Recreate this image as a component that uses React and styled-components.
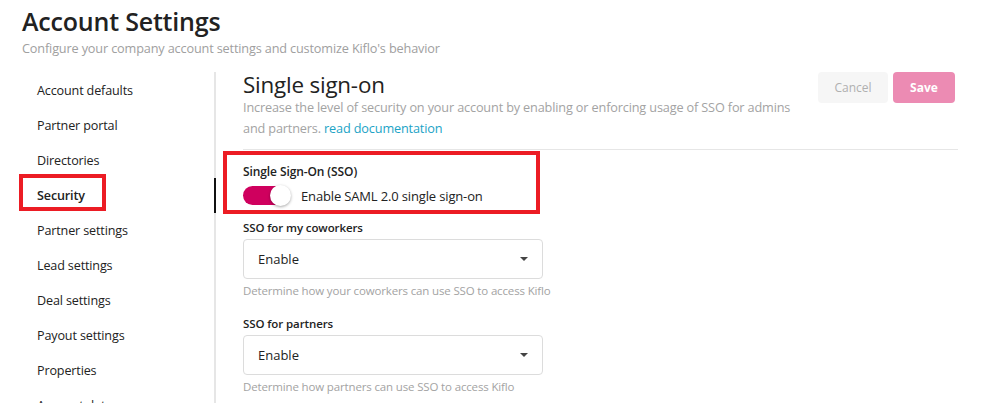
import styled, { createGlobalStyle } from 'styled-components'

const GlobalStyle = createGlobalStyle`
	html, body {
		margin: 0;
		padding: 0;
		background: #fff;
	}
	body {
		font-family: "Open Sans", "Noto Sans", sans-serif;
		color: #222;
		overflow: hidden;
	}
`

const Page = styled.div`
	width: 981px;
	height: 403px;
	overflow: hidden;
`

const Header = styled.header`
	padding: 5px 0 0 22px;
	height: 72px;
	box-sizing: border-box;
`

const PageTitle = styled.h1`
	margin: 0;
	font-size: 25px;
	line-height: 32px;
	font-weight: 600;
	color: #222;
	letter-spacing: -0.2px;
`

const PageSubtitle = styled.p`
	margin: 2px 0 0;
	font-size: 12.7px;
	line-height: 18px;
	color: #a0a0a0;
	letter-spacing: -0.15px;
`

const Body = styled.div`
	display: flex;
	align-items: stretch;
	height: 331px;
`

const Sidebar = styled.nav`
	width: 216px;
	flex-shrink: 0;
	border-right: 2px solid #e6e6e6;
	box-sizing: border-box;
	display: flex;
	flex-direction: column;
	padding-top: 1px;
	margin-right: 2px;
`

const NavItem = styled.div`
	position: relative;
	height: 35px;
	flex-shrink: 0;
	display: flex;
	align-items: center;
	padding-left: 37px;
	font-size: 12.6px;
	color: #222;
	font-weight: ${(p) => (p.$active ? 600 : 400)};
	letter-spacing: -0.15px;

	${(p) =>
		p.$active &&
		`
		&::before {
			content: '';
			position: absolute;
			right: -2px;
			top: 0;
			width: 2px;
			height: 35px;
			background: #111;
		}
		&::after {
			content: '';
			position: absolute;
			left: 19px;
			top: -4px;
			width: 87px;
			height: 37px;
			box-sizing: border-box;
			border: 4px solid #ec1c24;
		}
	`}
`

const Content = styled.main`
	flex: 1;
	padding: 0 26px 0 25px;
`

const SectionHead = styled.div`
	display: flex;
	justify-content: space-between;
	align-items: flex-start;
	padding-bottom: 10px;
	border-bottom: 1px solid #e6e6e6;
	margin-right: -3px;
`

const HeadText = styled.div`
	max-width: 556px;
`

const SectionTitle = styled.h2`
	margin: 0;
	font-size: 22.4px;
	line-height: 26px;
	font-weight: 400;
	color: #222;
	letter-spacing: -0.2px;
`

const SectionDesc = styled.p`
	margin: -1px 0 0;
	font-size: 12.7px;
	line-height: 21px;
	color: #a3a3a3;
	letter-spacing: -0.15px;
`

const DocLink = styled.a`
	color: #1ba3c6;
	text-decoration: none;
`

const Actions = styled.div`
	display: flex;
	gap: 5px;
	margin-right: 3px;
`

const Button = styled.button`
	height: 31px;
	width: ${(p) => (p.$primary ? '62px' : '70px')};
	padding: 0;
	border: none;
	border-radius: 4px;
	font-family: inherit;
	font-size: 12px;
	font-weight: ${(p) => (p.$primary ? 700 : 400)};
	background: ${(p) => (p.$primary ? '#ec8bb3' : '#f6f6f6')};
	color: ${(p) => (p.$primary ? '#fff' : '#b0b0b0')};
	cursor: default;
`

const Form = styled.div`
	padding-top: 13px;
`

const Highlight = styled.div`
	position: relative;

	&::after {
		content: '';
		position: absolute;
		left: -20px;
		top: -12px;
		width: 317px;
		height: 63px;
		box-sizing: border-box;
		border: 4px solid #ec1c24;
		pointer-events: none;
	}
`

const FieldLabel = styled.div`
	font-size: ${(p) => (p.$small ? '11.5px' : '12px')};
	line-height: 17px;
	font-weight: 600;
	color: #222;
	letter-spacing: -0.1px;
`

const ToggleRow = styled.div`
	display: flex;
	align-items: center;
	gap: 11px;
	margin-top: 5px;
	height: 21px;
`

const Switch = styled.span`
	position: relative;
	width: 47px;
	height: 19px;
	border-radius: 10px;
	background: ${(p) => (p.$on ? '#cf005e' : '#ccc')};
	flex-shrink: 0;

	&::after {
		content: '';
		position: absolute;
		top: -1px;
		${(p) => (p.$on ? 'right: -1px;' : 'left: -1px;')}
		width: 21px;
		height: 21px;
		border-radius: 50%;
		background: #fff;
		box-shadow: 0 1px 3px rgba(0, 0, 0, 0.35);
	}
`

const ToggleText = styled.span`
	font-size: 13px;
	color: #222;
	letter-spacing: -0.15px;
`

const Field = styled.div`
	margin-top: ${(p) => p.$top}px;
`

const Select = styled.div`
	margin-top: 3px;
	width: 300px;
	height: 40px;
	box-sizing: border-box;
	border: 1px solid #dcdcdc;
	border-radius: 4px;
	display: flex;
	align-items: center;
	justify-content: space-between;
	padding: 0 14px 0 14px;
	font-size: 13px;
	color: #222;
`

const Caret = styled.span`
	width: 0;
	height: 0;
	border-left: 4px solid transparent;
	border-right: 4px solid transparent;
	border-top: 4px solid #444;
`

const Helper = styled.div`
	margin-top: 4px;
	font-size: 11.5px;
	line-height: 16px;
	color: #a3a3a3;
	letter-spacing: -0.15px;
`

const navItems = [
	'Account defaults',
	'Partner portal',
	'Directories',
	'Security',
	'Partner settings',
	'Lead settings',
	'Deal settings',
	'Payout settings',
	'Properties',
	'Account data',
]

export default function App() {
	return (
		<Page>
			<GlobalStyle />
			<Header>
				<PageTitle>Account Settings</PageTitle>
				<PageSubtitle>Configure your company account settings and customize Kiflo's behavior</PageSubtitle>
			</Header>
			<Body>
				<Sidebar>
					{navItems.map((item) => (
						<NavItem key={item} $active={item === 'Security'}>
							{item}
						</NavItem>
					))}
				</Sidebar>
				<Content>
					<SectionHead>
						<HeadText>
							<SectionTitle>Single sign-on</SectionTitle>
							<SectionDesc>
								Increase the level of security on your account by enabling or enforcing usage of SSO for admins
								and partners. <DocLink href="#">read documentation</DocLink>
							</SectionDesc>
						</HeadText>
						<Actions>
							<Button>Cancel</Button>
							<Button $primary>Save</Button>
						</Actions>
					</SectionHead>
					<Form>
						<Highlight>
							<FieldLabel>Single Sign-On (SSO)</FieldLabel>
							<ToggleRow>
								<Switch $on />
								<ToggleText>Enable SAML 2.0 single sign-on</ToggleText>
							</ToggleRow>
						</Highlight>
						<Field $top={13}>
							<FieldLabel $small>SSO for my coworkers</FieldLabel>
							<Select>
								Enable
								<Caret />
							</Select>
							<Helper>Determine how your coworkers can use SSO to access Kiflo</Helper>
						</Field>
						<Field $top={16}>
							<FieldLabel $small>SSO for partners</FieldLabel>
							<Select>
								Enable
								<Caret />
							</Select>
							<Helper>Determine how partners can use SSO to access Kiflo</Helper>
						</Field>
					</Form>
				</Content>
			</Body>
		</Page>
	)
}
